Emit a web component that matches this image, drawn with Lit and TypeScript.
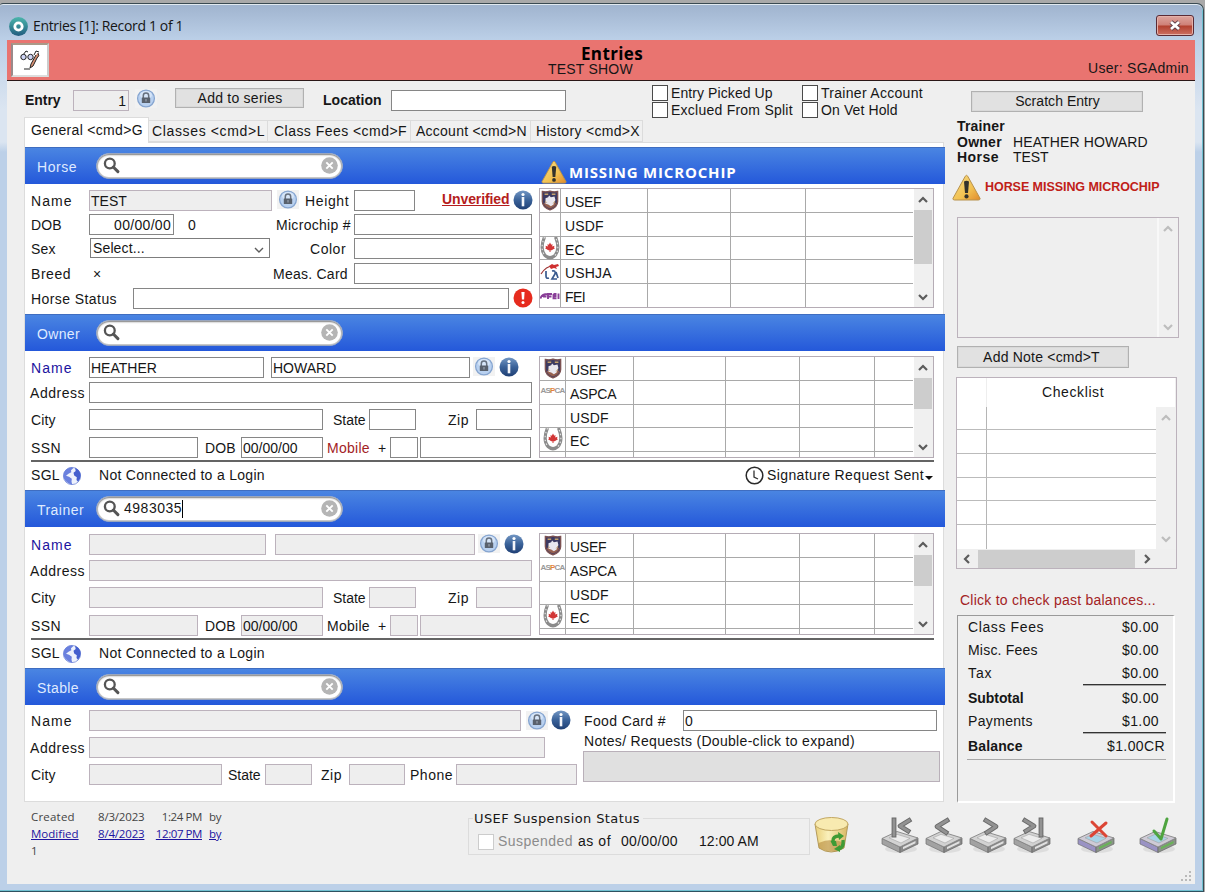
import { LitElement, html, css, nothing } from "lit";
import { customElement, property } from "lit/decorators.js";

/** A single line of text tracked out to a given width. */
@customElement("fit-text")
class FitText extends LitElement {
  static styles = css`
    :host { display: block; white-space: pre; padding-left: 1px; }
    .run { display: inline-block; text-decoration: inherit; }
  `;
  @property() text = "";
  @property({ type: Number }) w = 0;
  firstUpdated() {
    const run = this.renderRoot.querySelector(".run") as HTMLElement;
    const natural = run.getBoundingClientRect().width;
    const n = this.text.length;
    if (this.w && n > 1) run.style.letterSpacing = `${((this.w + 0.6 - natural) / (n - 1)).toFixed(3)}px`;
  }
  render() {
    return html`<span class="run">${this.text}</span>`;
  }
}

const T = (text: string, w = 0, cls = "") => html`<fit-text class=${cls} .text=${text} .w=${w}></fit-text>`;

const lock = () => html`<svg class="lock" width="22" height="19" viewBox="0 0 22 19">
  <rect width="22" height="19" fill="#f2f2f2"/>
  <circle cx="11" cy="9.5" r="8.4" fill="#b9d1f0" stroke="#86a5d0" stroke-width="1.3"/>
  <ellipse cx="11" cy="6" rx="6" ry="4" fill="#d6e5f8"/>
  <path d="M8.3 9V6.8a2.7 2.7 0 0 1 5.4 0V9" fill="none" stroke="#66707e" stroke-width="1.5"/>
  <rect x="6.8" y="8.5" width="8.4" height="5.6" rx=".6" fill="#59616d"/>
  <rect x="10.3" y="10" width="1.4" height="2.5" fill="#8f98a5"/>
</svg>`;

const info = () => html`<svg class="info" width="20" height="20" viewBox="0 0 20 20">
  <defs><linearGradient id="ig" x1="0" y1="0" x2="0" y2="1"><stop offset="0" stop-color="#7397c4"/><stop offset=".5" stop-color="#3a6299"/><stop offset="1" stop-color="#1f3f74"/></linearGradient></defs>
  <circle cx="10" cy="10" r="9.5" fill="url(#ig)"/>
  <circle cx="10" cy="4.5" r="1.6" fill="#fff"/><rect x="8.7" y="7" width="2.6" height="9.3" fill="#f4f6fa"/>
</svg>`;

const alertIcon = () => html`<svg width="20" height="20" viewBox="0 0 20 20">
  <circle cx="10" cy="10" r="9.5" fill="#e62b1e"/><path d="M8.4 4h3.2l-.5 7.5H8.9z" fill="#fff"/><circle cx="10" cy="14.4" r="1.5" fill="#fff"/>
</svg>`;

const warning = (w: number, h: number) => html`<svg width=${w} height=${h} viewBox="0 0 29 27">
  <defs><linearGradient id="wg" x1="0" y1="0" x2="1" y2="1"><stop offset="0" stop-color="#f7dc86"/><stop offset=".6" stop-color="#f2c151"/><stop offset="1" stop-color="#e08a2c"/></linearGradient></defs>
  <path d="M13.3 2.2q1.200-1.800 2.400 0L28 24.3q.4 1.7-1.5 1.7h-24Q.6 26 1 24.3z" fill="url(#wg)" stroke="#b8924c" stroke-width="1"/>
  <path d="M12 7.5q2.5-1.6 5 0L16 19h-3z" fill="#33322c"/><circle cx="14.5" cy="22.4" r="2.1" fill="#33322c"/>
</svg>`;

const globe = () => html`<svg width="20" height="20" viewBox="0 0 20 20">
  <circle cx="10" cy="10" r="8.6" fill="#eef2fc" stroke="#8d9fe0" stroke-width="1"/>
  <path d="M2 6.5Q4.500 1.500 10 1.200l1.200 1-2.200 2 .3 2-2.800 1.600-2.500 2 3 1 2.800 2-.3 3 .8 3Q2 16.500 1.400 10z" fill="#6a80de"/>
  <path d="M13 1.700q5 2 5.700 7.300 0 4-2.700 6.800l-1.500-1.800.3-2.800-2.600-1.700-.7-2.700 2.200-1.800z" fill="#4560ce"/>
</svg>`;

const mag = () => html`<svg class="mag" width="17" height="17" viewBox="0 0 17 17">
  <circle cx="6.8" cy="6.5" r="4.9" fill="none" stroke="#555" stroke-width="2.3"/><path d="m10.3 10 4.6 4.6" stroke="#555" stroke-width="3" stroke-linecap="round"/>
</svg>`;

const clear = () => html`<svg width="17" height="17" viewBox="0 0 17 17">
  <circle cx="8.5" cy="8.5" r="8.3" fill="#b5b5b5"/><path d="m5.3 5.3 6.4 6.4m0-6.4-6.4 6.4" stroke="#fff" stroke-width="1.9"/>
</svg>`;

const chevrons: Record<string, string> = { up: "M2 8 6 4l4 4", down: "m2 4 4 4 4-4", left: "M8 2 4 6l4 4", right: "m4 2 4 4-4 4" };
const chev = (dir: string, faint = false, sw = 2.2) => html`<svg class="chev" width="12" height="12" viewBox="0 0 12 12">
  <path d=${chevrons[dir]} fill="none" stroke=${faint ? "#bdbdbd" : "#5c5c5c"} stroke-width=${sw}/></svg>`;

const badges: Record<string, unknown> = {
  USEF: html`<svg width="18" height="21" viewBox="0 0 20 23"><path d="M1.500 1.500q4.500 1 8.500-.5 4 1.500 8.500.5v11q0 6-8.500 9.500-8.500-3.500-8.500-9.500z" fill="#3c3a62" stroke="#7c5252" stroke-width="1.500"/><path d="M3 14q1 4.500 7 6.500 6-2 7-6.500z" fill="#96604f"/><path d="m5 9 3-1 1-2 2 2 4-1 1 4-2 5-3 2-3-2-3-1z" fill="#e9e7ef"/><path d="M4 4.500h4M12 4.500h4" stroke="#c7a36c" stroke-width="1.600"/><path d="m4.500 12 2 2m9-2-2 3" stroke="#c7a36c"/></svg>`,
  EC: html`<svg width="20" height="23" viewBox="0 0 20 23"><path d="M4.500 0Q-.5 12 5 18.500q5 4.500 10 0Q20.500 12 15.500 0" fill="none" stroke="#8b8b8b" stroke-width="3.200"/><path d="M4.500 0Q-.5 12 5 18.500M15 18.500Q20.500 12 15.500 0" fill="none" stroke="#e4e4e4" stroke-width="1.200" stroke-dasharray="1.500 2.500"/><path d="m10 5.500 1.200 2.200 1.300-.7-.3 2.500 2.300-.8-.5 1.700 1 .9-3.400 2h-3.200l-3.400-2 1-.9-.5-1.700 2.300.8-.3-2.500 1.300.7z" fill="#d23636"/><path d="M10 13v2" stroke="#d23636"/></svg>`,
  USHJA: html`<svg width="20" height="18" viewBox="0 0 20 18"><path d="M1 11Q6 3 13 3" fill="none" stroke="#9b3434" stroke-width="1.200"/><path d="m9 3 3-2 2 1 4-1 1 2-3 1 1 2-3-1-3 1z" fill="#cf3030"/><path d="M6 8v5q0 3 3 2M12 8q4-1 3 3l-3 5h5M16 9l2 6" fill="none" stroke="#395a8e" stroke-width="1.700"/></svg>`,
  FEI: html`<svg width="20" height="10" viewBox="0 0 20 10"><path d="M.5 7.500q1-4.500 7-4.500M3 5.500h3.500M8 8V3h4M8 5.500h3.500M13.500 3v4.200h3M13.500 3h3M13.500 5h3M18.500 2.500v5.500" fill="none" stroke="#8a3f98" stroke-width="1.900"/></svg>`,
  ASPCA: html`<span class="aspca">AS<b>P</b>CA</span>`,
};

const drive = (tone: string, mark: unknown) => html`<svg class="drive" width="38" height="38" viewBox="0 0 38 38">
  <ellipse cx="20" cy="33" rx="16" ry="4" fill="#d5d5d5" opacity=".7"/>
  <path d="M1 22.500 19 31v5.500L1 28z" fill=${tone === "grey" ? "#a2a2a2" : "#9a93c4"} stroke="#707070" stroke-width=".7"/>
  <path d="M19 36.500 37 28v-6l-18 9z" fill=${tone === "grey" ? "#8a8a8a" : "#8a9488"} stroke="#666" stroke-width=".7"/>
  <path d="M1 22.500 16 15.500l21 6.500-18 9z" fill=${tone === "grey" ? "#d2d2d2" : "#cfcbd6"} stroke="#858585" stroke-width=".9"/>
  <path d="m8 21.800 8-3.500 13 4-9 4.700z" fill=${tone === "grey" ? "#ececec" : "#a9d3e6"} stroke="#a2a2a2" stroke-width=".6"/>
  <path d="m22 33.300 12.500-6v-2.300L22 31z" fill=${tone === "grey" ? "#e0e0e0" : "#69b357"}/>
  ${mark}
</svg>`;

const greyMark = (d: string) => html`<svg width="38" height="38" viewBox="0 0 38 38"><path d=${d} fill="none" stroke="#6a6a6a" stroke-width="4.800" stroke-linecap="square" stroke-linejoin="round"/><path d=${d} fill="none" stroke="#929292" stroke-width="2.800" stroke-linecap="square" stroke-linejoin="round"/></svg>`;
const colourMark = (d: string, c: string) => html`<svg width="38" height="38" viewBox="0 0 38 38"><path d=${d} fill="none" stroke=${c} stroke-width="3" stroke-linecap="round" stroke-linejoin="round"/></svg>`;

const field = (value = "", cls = "") => html`<div class="field ${cls}">${value ? T(value) : nothing}</div>`;

const bar = (name: string, w: number, query = "", extra: unknown = nothing) => html`
  <div class="bar">
    <div class="barname">${T(name, w)}</div>
    <div class="pill">${mag()}<div class="query">${query ? html`${T(query, 57)}<i class="caret"></i>` : nothing}</div>${clear()}</div>
    ${extra}
  </div>`;

const table = (cls: string, names: [string, number][], cells: number) => html`
  <div class="table ${cls}">
    <div class="rows">
      ${names.map(([n, w]) => html`<div class="trow"><div class="badge">${badges[n] ?? nothing}</div><div class="org">${n ? T(n, w) : nothing}</div>${Array.from({ length: cells }, () => html`<div></div>`)}</div>`)}
    </div>
    <div class="vscroll">${chev("up")}<div class="thumb"></div><span class="grow"></span>${chev("down")}</div>
  </div>`;

@customElement("app-root")
class AppRoot extends LitElement {
  static styles = css`
    :host { display: block; width: 1205px; height: 892px; overflow: hidden; font: 14px/21px "Liberation Sans", Arial, sans-serif; color: #161616; background: #a9a9a9; }
    * { box-sizing: border-box; }
    svg { display: block; flex: none; }
    b, .bold { font-weight: 700; }
    .grow { flex: 1; }
    .window { height: 889px; margin-top: 3px; width: 1204px; border: solid #3a4a52; border-width: 1px 1px 1px 0; border-bottom-color: #2f5260; border-radius: 3px 7px 0 0; background: linear-gradient(#9fb3ce 0, #bbcfe7 35px, #dbe5f1 105px, #dbe5f1 138px, #bcd0e8 148px); padding: 0 8px 7px 7px; box-shadow: inset 0 1px #e2eaf0, inset -1px -1px #6fc0d0; display: flex; flex-direction: column; }
    .title { height: 36px; flex: none; display: flex; align-items: center; padding: 8px 1px 0 2px; font: 14px/18px "Open Sans", "Noto Sans", sans-serif; gap: 4px; }
    .close { width: 38px; height: 21px; border: 1px solid #5b2b35; border-radius: 3px; background: linear-gradient(#dda59e, #cf8077 48%, #b2402f 52%, #cc7063); display: grid; place-items: center; box-shadow: inset 0 0 0 1px #e5b1a9; margin-top: -2px; }
    .red { height: 41px; flex: none; background: #e97470; border-bottom: 1px solid #2b1717; display: grid; grid-template-columns: 536px 1fr 108px; padding-left: 4px; }
    .tool { width: 38px; height: 34px; margin-top: 3px; background: #fff; border: 2px solid; border-color: #a98 #ccc #ddd #9a8a8a; display: grid; place-items: center; }
    .big { font: 700 17px/20px "Open Sans", "Noto Sans", sans-serif; color: #000; padding: 4px 0 0 33px; height: 20px; }
    .show { line-height: 16px; margin-top: 1px; }
    .user { padding-top: 18px; }
    .client { flex: 1; min-height: 0; background: #efefef; display: grid; grid-template-columns: 938px 249px; grid-template-rows: 722px 1fr; }
    .main { padding-left: 17px; display: flex; flex-direction: column; }

    .row { display: grid; height: 21px; align-items: stretch; }
    .row > fit-text { line-height: 22px; }
    .row > svg { align-self: center; }
    .row > :nth-child(1) { grid-column: 2; } .row > :nth-child(2) { grid-column: 4; } .row > :nth-child(3) { grid-column: 6; }
    .row > :nth-child(4) { grid-column: 8; } .row > :nth-child(5) { grid-column: 10; } .row > :nth-child(6) { grid-column: 12; }
    .row > :nth-child(7) { grid-column: 14; } .row > :nth-child(8) { grid-column: 16; }
    .field { border: 1px solid #868686; background: #fff; line-height: 20px; height: 21px; overflow: hidden; }
    .off { background: #eee; border-color: #bcb2bc; }
    .right { display: flex; justify-content: flex-end; padding-right: 2px; }
    .button { border: 1px solid #b1b1b1; background: #e1e1e1; display: flex; justify-content: center; height: 21px; line-height: 19px; box-shadow: inset 0 0 0 1px #d9d9d9; }
    .row > .button fit-text { line-height: 18px; }
    .box { width: 16px; height: 16px; border: 1px solid #4a4a4a; background: #fff; }
    .blue { color: #1c14a0; } .crimson { color: #a32224; } .dim { color: #8b8b8b; }

    .head { height: 36px; display: flex; align-items: flex-start; }
    .entry { padding-top: 9px; }
    .r-entry { grid-template-columns: 0 40px 9px 56px 6px 22px 18px 129px 18px 62px 7px 175px; }
    .r-entry > .bold { line-height: 20px; }
    .r-entry > svg { margin-top: -4px; } .r-entry > .button { margin-top: -2px; height: 20px; }
    .checks { display: grid; grid-template-columns: 16px 130px 16px 110px; column-gap: 2px; row-gap: 1px; padding: 4px 0 0 86px; line-height: 16px; }
    .tabs { height: 25px; display: flex; align-items: flex-end; position: relative; }
    .tab { height: 22px; border: 1px solid #dcdcdc; border-left: 0; padding-left: 5px; line-height: 21px; background: #f0f0f0; }
    .tab.on { height: 26px; margin-bottom: -1px; width: 125px; background: #fff; border-left: 1px solid #dcdcdc; border-bottom: 0; line-height: 25px; z-index: 1; }
    .t2 { width: 119px; padding-left: 2px; } .t3 { width: 143px; } .t4 { width: 120px; padding-left: 4px; } .t5 { width: 112px; padding-left: 4px; }
    .panel { width: 920px; height: 660px; background: #fff; border: 1px solid #dcdcdc; padding-top: 4px; }
    .bar { height: 37px; width: 920px; background: linear-gradient(#4a85e2, #2458da); border-top: 1px solid #3f6dc0; display: flex; align-items: center; color: #dfeaff; }
    .barname { width: 71px; padding-left: 11px; padding-top: 2px; }
    .pill { width: 247px; height: 26px; border-radius: 13px; background: #fff; border: 1px solid #9aa6bd; box-shadow: inset 0 1px 2px #888, inset 0 0 0 1px #ccc; display: flex; align-items: center; padding: 0 4px 0 6px; color: #161616; margin-top: -1px; }
    .query { flex: 1; display: flex; padding-left: 3px; align-items: center; }
    .caret { width: 1px; height: 18px; background: #000; }
    .miss { display: flex; align-items: center; margin-left: 198px; padding-top: 11px; gap: 1px; color: #fff; font: 700 15px/20px "Open Sans", "Noto Sans", sans-serif; }
    .sec { display: grid; grid-template-columns: 514px 396px; }
    .horse { height: 130px; }
    .person { height: 109px; }
    .fields { display: flex; flex-direction: column; }

    .horse .fields { padding-top: 6px; }
    .h1, .h2 { margin-bottom: 3px; } .h3, .h4 { margin-bottom: 4px; }
    .h1 { grid-template-columns: 5px 50px 9px 183px 5px 22px 5px 46px 4px 61px 26px 70px 2px 20px; }
    .h1 > svg { margin-top: -3px; }
    .h2 { grid-template-columns: 5px 50px 9px 85px 13px 12px 76px 76px 3px 178px; }
    .h3 { grid-template-columns: 5px 50px 10px 180px 39px 40px 5px 178px; }
    .h4 { grid-template-columns: 5px 50px 12px 20px 160px 78px 4px 178px; }
    .h5 { grid-template-columns: 5px 90px 13px 376px 4px 20px; }
    .h5 > svg { margin-top: -3px; }
    .select { border: 1px solid #7d7d7d; height: 20px; line-height: 18px; padding: 0 4px 0 1px; display: flex; justify-content: space-between; align-items: center; }
    .select > svg { margin-top: 3px; }
    .unver { font-weight: 700; color: #b51d1d; text-decoration: underline; }
    .row > .unver { line-height: 19px; }

    .person .fields { padding-top: 6px; }
    .p1 { margin-bottom: 4px; } .p2 { margin-bottom: 6px; } .p3 { margin-bottom: 7px; }
    .p1 > svg { margin-top: -3px; }
    .p1 { grid-template-columns: 5px 50px 9px 175px 7px 199px 3px 22px 4px 20px; }
    .trainer .p1 { grid-template-columns: 5px 50px 9px 177px 9px 200px 3px 22px 4px 20px; }
    .trainer .p1 { margin-bottom: 5px; }
    .p2 { grid-template-columns: 4px 58px 2px 443px; }
    .p3 { grid-template-columns: 5px 50px 9px 234px 9px 36px 1px 47px 31px 24px 5px 56px; }
    .p4 { grid-template-columns: 5px 50px 9px 109px 6px 34px 3px 82px 3px 44px 7px 12px 1px 28px 2px 111px; }
    .trainer.person { height: 111px; } .trainer .fields { padding-top: 7px; }
    .sgl { display: flex; align-items: center; margin-left: 6px; width: 903px; border-top: 2px solid #646464; height: 30px; padding-bottom: 1px; }
    .s1 { width: 32px; margin-left: -1px; } .s2 { margin-left: 16px; }
    .sig { display: flex; align-items: center; margin-left: auto; gap: 2px; }
    .tri { border: 4px solid transparent; border-top-color: #111; border-bottom: 0; margin: 4px 1px 0 -1px; }

    .stable { display: grid; grid-template-columns: 558px 357px; }
    .stable .fields { padding-top: 5px; gap: 6px; }
    .st1 { grid-template-columns: 5px 50px 9px 432px 5px 22px 3px 20px; }
    .st1 > svg { margin-top: -2px; }
    .st2 { grid-template-columns: 4px 58px 2px 456px; }
    .st3 { grid-template-columns: 5px 50px 9px 133px 5px 36px 2px 47px 8px 24px 5px 56px 4px 46px 1px 121px; }
    .food { grid-template-columns: 0 90px 10px 254px; margin-top: 5px; }
    .notes { height: 31px; background: #e0e0e0; border: 1px solid #b9b0b9; margin-top: -1px; }

    .table { width: 395px; display: grid; grid-template-columns: 1fr 20px; border: 1px solid #b5acb5; overflow: hidden; background: #fff; line-height: 24px; }
    .rows { overflow: hidden; }
    .trow { display: grid; height: 23.800px; border-bottom: 1px solid #a9a9a9; }
    .trow > * { border-right: 1px solid #a9a9a9; } .trow > :last-child { border-right: 0; }
    .thorse .trow { grid-template-columns: 21px 87px 83px 75px 1fr; }
    .tperson .trow { grid-template-columns: 26px 68px 92px 74px 75px 1fr; }
    .thorse { height: 120px; margin-top: 4px; } .tperson { height: 102px; margin-top: 5px; }
    .trainer .tperson { margin-top: 6px; }
    .badge { display: grid; place-items: center; overflow: hidden; height: 23px; }
    .org { padding: 1px 0 0 3px; }
    .aspca { font: 700 8px/9px "Liberation Sans"; letter-spacing: -.8px; color: #999; margin-bottom: 4px; } .aspca b { color: #e5853c; }
    .vscroll { background: #f0f0f0; display: flex; flex-direction: column; align-items: center; padding: 5px 2px 4px 1px; margin-left: 1px; }
    .thumb { width: 18px; height: 31px; background: #cdcdcd; margin-top: 4px; }
    .thorse .thumb { height: 54px; }

    .side { padding-left: 12px; }
    .scratch { width: 172px; margin: 10px 0 0 14px; }
    .who { display: grid; grid-template-columns: 56px 1fr; line-height: 15.500px; margin: 7px 0 0 -1px; }
    .hmm { display: flex; align-items: center; margin: 8px 0 0 -5px; gap: 3px; font-weight: 700; font-size: 12.500px; color: #c02018; }
    .hmm fit-text { line-height: 20px; }
    .memo { width: 222px; height: 121px; border: 1px solid #bcb2bc; margin-top: 16px; display: flex; justify-content: flex-end; }
    .memo .vscroll { border-left: 2px solid #f8f8f8; width: 21px; }
    .addnote { width: 172px; margin-top: 8px; height: 22px; line-height: 20px; padding-right: 4px; }
    .check { width: 221px; height: 192px; border: 1px solid #bcb2bc; margin: 9px 0 0 -1px; display: flex; flex-direction: column; }
    .chead { display: grid; grid-template-columns: 29px 1fr; height: 29px; background: #fff; margin-right: 1px; line-height: 28px; }
    .chead > :last-child { border-left: 1px solid #eee; padding-left: 54px; }
    .cbody { display: grid; grid-template-columns: 1fr 20px; height: 142px; overflow: hidden; }
    .cgrid { background: #fff; overflow: hidden; }
    .crow { height: 23.700px; border-bottom: 1px solid #bbb; display: grid; grid-template-columns: 30px 1fr; }
    .crow:last-child { border-bottom: 0; }
    .crow > :first-child { border-right: 1px solid #b5b5b5; }
    .cbody .vscroll { margin-left: 0; }
    .hscroll { display: flex; align-items: center; height: 18px; margin-top: 1px; padding: 0 23px 0 4px; justify-content: space-between; }
    .hthumb { width: 157px; height: 18px; background: #cdcdcd; margin: 0 5px 0 4px; }
    .past { margin: 21px 0 0 2px; color: #a32224; height: 21px; }
    .totals { width: 218px; height: 188px; margin-top: 4px; border: solid; border-width: 1px 2px 2px 1px; border-color: #9a9a9a #fff #fff #9a9a9a; padding: 0 14px 0 9px; line-height: 22px; }
    .sum { display: flex; justify-content: space-between; height: 23px; }
    .rule { height: 2px; width: 83px; background: linear-gradient(#333 60%, #aaa 0); margin: -1px -7px 1px auto; }
    .rule.full { width: 199px; background: #a8a8a8; height: 1px; margin-top: 1px; }
    .sum.wide { margin-right: -6px; }

    .foot { grid-column: 1 / 3; display: flex; padding: 0 0 0 23px; align-items: flex-start; }
    .audit { width: 438px; display: grid; grid-template-columns: 67px 58px 53px 1fr; grid-auto-rows: 17px; padding-top: 5px; font: 11.500px/17px "Open Sans", "Noto Sans", sans-serif; color: #444; }
    .audit .pm { width: 47px; display: flex; justify-content: flex-end; }
    .audit .lnk { color: #1c14a0; text-decoration: underline; }
    .suspend { width: 342px; height: 37px; margin: 15px 0 0; border: 1px solid #dcdcdc; }
    .legend { font: 13px/18px "DejaVu Sans", sans-serif; background: #efefef; width: 170px; margin: -9px 0 0 4px; height: 18px; }
    .r-sus { grid-template-columns: 9px 16px 3px 76px 4px 34px 9px 58px 20px 64px; margin-top: 3px; }
    .r-sus > fit-text { line-height: 21px; }
    .sbox { border-color: #ccc; margin-top: 3px; }
    .icons { display: flex; padding-top: 13px; }
    .icons > :nth-child(1) { margin-left: 3px; } .icons > :nth-child(2) { margin-left: 30px; }
    .icons > :nth-child(n + 3) { margin-left: 6px; } .icons > :nth-child(6) { margin-left: 26px; } .icons > :nth-child(7) { margin-left: 24px; }
    .grip { margin: 67px 0 0 3px; }
  `;

  person(kind: "owner" | "trainer") {
    const off = kind === "trainer" ? "off" : "";
    return html`
      <div class="sec person ${kind}">
        <div class="fields">
          <div class="row p1">${T("Name", 40, "blue")}${field(off ? "" : "HEATHER", off)}${field(off ? "" : "HOWARD", off)}${lock()}${info()}</div>
          <div class="row p2">${T("Address", 54)}${field("", off)}</div>
          <div class="row p3">${T("City", 24)}${field("", off)}${T("State", 32)}${field("", off)}${T("Zip", 20)}${field("", off)}</div>
          <div class="row p4">${T("SSN", 29)}${field("", off)}${T("DOB", 30)}${field("00/00/00", off)}${T("Mobile", 42, off ? "" : "crimson")}${T("+")}${field("", off)}${field("", off)}</div>
        </div>
        ${table("tperson", [["USEF", 36], ["ASPCA", 46], ["USDF", 38], ["EC", 19], ["", 0]], 4)}
      </div>
      <div class="sgl">
        <div class="s1">${T("SGL", 28)}</div>${globe()}<div class="s2">${T("Not Connected to a Login", 165)}</div>
        ${off ? nothing : html`<div class="sig">
          <svg width="19" height="19" viewBox="0 0 19 19"><circle cx="9.500" cy="9.500" r="8.300" fill="none" stroke="#2b2b2b" stroke-width="1.500"/><path d="M9 4.500V11l4 2" fill="none" stroke="#333" stroke-width="1.300"/></svg>
          ${T("Signature Request Sent", 156)}<i class="tri"></i></div>`}
      </div>`;
  }

  render() {
    return html`
      <div class="window">
        <div class="title">
          <svg width="19" height="19" viewBox="0 0 19 19"><defs><linearGradient id="og" x1="0" y1="0" x2="0" y2="1"><stop offset="0" stop-color="#4bb5ab"/><stop offset="1" stop-color="#225d80"/></linearGradient></defs><circle cx="9.500" cy="9.500" r="9.400" fill="url(#og)"/><circle cx="9.500" cy="9.500" r="3.700" fill="none" stroke="#fff" stroke-width="2.800"/></svg>
          ${T("Entries [1]: Record 1 of 1", 150)}
          <span class="grow"></span>
          <div class="close"><svg width="14" height="11" viewBox="0 0 14 11"><path d="m3 2 8 7m0-7-8 7" stroke="#5d3f49" stroke-width="4.400"/><path d="m3 2 8 7m0-7-8 7" stroke="#fff" stroke-width="2.700"/></svg></div>
        </div>
        <div class="red">
          <div class="tool"><svg width="22" height="22" viewBox="0 0 22 22" fill="none" stroke="#222"><path d="m4 6 3-4 2 1M15 6l2-4 3 1"/><circle cx="4.500" cy="8" r="2.700" fill="#cfd5f5"/><circle cx="11.500" cy="8" r="2.700" fill="#cfd5f5"/><path d="M19 4q2 3-1 5l-4 8-3 2 1-4 5-9" fill="#d89072"/><path d="M5 20h6"/></svg></div>
          <div><div class="big">${T("Entries", 61)}</div><div class="show">${T("TEST SHOW", 84)}</div></div>
          <div class="user">${T("User: SGAdmin", 100)}</div>
        </div>
        <div class="client">
          <div class="main">
            <div class="head">
              <div class="entry"><div class="row r-entry">${T("Entry", 35, "bold")}<div class="field off right">${T("1")}</div>${lock()}<div class="button">${T("Add to series", 84)}</div>${T("Location", 58, "bold")}${field()}</div></div>
              <div class="checks">
                <i class="box"></i>${T("Entry Picked Up", 101)}<i class="box"></i>${T("Trainer Account", 101)}
                <i class="box"></i>${T("Exclued From Split", 121)}<i class="box"></i>${T("On Vet Hold", 76)}
              </div>
            </div>
            <div class="tabs">
              <div class="tab on">${T("General <cmd>G", 111)}</div>
              <div class="tab t2">${T("Classes <cmd>L", 112)}</div>
              <div class="tab t3">${T("Class Fees <cmd>F", 132)}</div>
              <div class="tab t4">${T("Account <cmd>N", 110)}</div>
              <div class="tab t5">${T("History <cmd>X", 103)}</div>
            </div>
            <div class="panel">
              ${bar("Horse", 39, "", html`<div class="miss">${warning(26, 24)}${T("MISSING MICROCHIP", 166)}</div>`)}
              <div class="sec horse">
                <div class="fields">
                  <div class="row h1">${T("Name", 40)}${field("TEST", "off")}${lock()}${T("Height", 43)}${field()}${T("Unverified", 67, "unver")}${info()}</div>
                  <div class="row h2">${T("DOB", 30)}<div class="field right">${T("00/00/00", 56)}</div>${T("0")}${T("Microchip #", 74)}${field()}</div>
                  <div class="row h3">${T("Sex", 24)}<div class="select">${T("Select...", 51)}${chev("down", false, 1.4)}</div>${T("Color", 35)}${field()}</div>
                  <div class="row h4">${T("Breed", 39)}${T("×")}${T("Meas. Card", 74)}${field()}</div>
                  <div class="row h5">${T("Horse Status", 85)}${field()}${alertIcon()}</div>
                </div>
                ${table("thorse", [["USEF", 36], ["USDF", 38], ["EC", 19], ["USHJA", 46], ["FEI", 20]], 3)}
              </div>
              ${bar("Owner", 42)}
              ${this.person("owner")}
              ${bar("Trainer", 46, "4983035")}
              ${this.person("trainer")}
              ${bar("Stable", 41)}
              <div class="stable">
                <div class="fields">
                  <div class="row st1">${T("Name", 40)}${field("", "off")}${lock()}${info()}</div>
                  <div class="row st2">${T("Address", 54)}${field("", "off")}</div>
                  <div class="row st3">${T("City", 24)}${field("", "off")}${T("State", 32)}${field("", "off")}${T("Zip", 20)}${field("", "off")}${T("Phone", 42)}${field("", "off")}</div>
                </div>
                <div>
                  <div class="row food">${T("Food Card #", 81)}${field("0")}</div>
                  ${T("Notes/ Requests (Double-click to expand)", 270)}
                  <div class="notes"></div>
                </div>
              </div>
            </div>
          </div>
          <div class="side">
            <div class="button scratch">${T("Scratch Entry", 84)}</div>
            <div class="who">
              ${T("Trainer", 47, "bold")}<span></span>
              ${T("Owner", 44, "bold")}${T("HEATHER HOWARD", 134)}
              ${T("Horse", 41, "bold")}${T("TEST", 35)}
            </div>
            <div class="hmm">${warning(29, 27)}${T("HORSE MISSING MICROCHIP", 174)}</div>
            <div class="memo"><div class="vscroll">${chev("up", true)}<span class="grow"></span>${chev("down", true)}</div></div>
            <div class="button addnote">${T("Add Note <cmd>T", 116)}</div>
            <div class="check">
              <div class="chead"><div></div><div>${T("Checklist", 61)}</div></div>
              <div class="cbody">
                <div class="cgrid">${[1, 2, 3, 4, 5, 6].map(() => html`<div class="crow"><div></div><div></div></div>`)}</div>
                <div class="vscroll">${chev("up", true)}<span class="grow"></span>${chev("down", true)}</div>
              </div>
              <div class="hscroll">${chev("left")}<div class="hthumb"></div>${chev("right")}</div>
            </div>
            <div class="past">${T("Click to check past balances...", 195)}</div>
            <div class="totals">
              <div class="sum">${T("Class Fees", 75)}${T("$0.00", 36)}</div>
              <div class="sum">${T("Misc. Fees", 69)}${T("$0.00", 36)}</div>
              <div class="sum">${T("Tax", 23)}${T("$0.00", 36)}</div>
              <div class="rule"></div>
              <div class="sum">${T("Subtotal", 55, "bold")}${T("$0.00", 36)}</div>
              <div class="sum">${T("Payments", 64)}${T("$1.00", 36)}</div>
              <div class="rule"></div>
              <div class="sum wide">${T("Balance", 54, "bold")}${T("$1.00CR", 57)}</div>
              <div class="rule full"></div>
            </div>
          </div>
          <div class="foot">
            <div class="audit">
              ${T("Created", 43)}${T("8/3/2023", 46)}<div class="pm">${T("1:24 PM", 40)}</div>${T("by", 12)}
              ${T("Modified", 47, "lnk")}${T("8/4/2023", 46, "lnk")}<div class="pm">${T("12:07 PM", 46, "lnk")}</div>${T("by", 12, "lnk")}
              ${T("1")}
            </div>
            <div class="suspend">
              <div class="legend">${T("USEF Suspension Status", 165)}</div>
              <div class="row r-sus"><i class="box sbox"></i>${T("Suspended", 74, "dim")}${T("as of", 32)}${T("00/00/00", 56)}${T("12:00 AM", 59)}</div>
            </div>
            <div class="icons">
              <svg width="38" height="38" viewBox="0 0 38 38"><defs><linearGradient id="tg"><stop offset="0" stop-color="#e9cf78"/><stop offset=".4" stop-color="#faf0bb"/><stop offset="1" stop-color="#d9b763"/></linearGradient></defs><path d="m2 8 4 24q12 8 25 0l4-24z" fill="url(#tg)" stroke="#b39a5c"/><path d="M5.500 27q13-6 26 0l-.8 5q-12 7-24.500 0z" fill="#b58a40" opacity=".6"/><ellipse cx="18.500" cy="8" rx="16.500" ry="6.500" fill="#f8eab0" stroke="#c2a660"/><g fill="none" stroke="#3f9b35" stroke-width="3.400"><path d="M20 25q0-5 6-5M30 24q1 7-4 9"/></g><path d="m25 16 6 4-5 4zM27 29v7l-6-3zM17.500 25h5.500l1 5h-4z" fill="#3f9b35"/></svg>
              ${drive("grey", greyMark("M13 4v15M28 4.500 19 10l8 5"))}
              ${drive("grey", greyMark("m22 4.500-10 6 9 6"))}
              ${drive("grey", greyMark("m17 4.500 10 6-9 6"))}
              ${drive("grey", greyMark("m12 4.500 9 5.500-8 5M28 4v15"))}
              ${drive("colour", colourMark("m15 6 14 14M29 7 14 20", "#dc4535"))}
              ${drive("colour", colourMark("m15 15 7 8 6-20", "#4ea440"))}
            </div>
            <svg class="grip" width="12" height="12" viewBox="0 0 12 12" fill="#b9b9b9"><path d="M9 1h2v2H9zM9 5h2v2H9zM5 5h2v2H5zM9 9h2v2H9zM5 9h2v2H5zM1 9h2v2H1z"/></svg>
          </div>
        </div>
      </div>`;
  }
}
